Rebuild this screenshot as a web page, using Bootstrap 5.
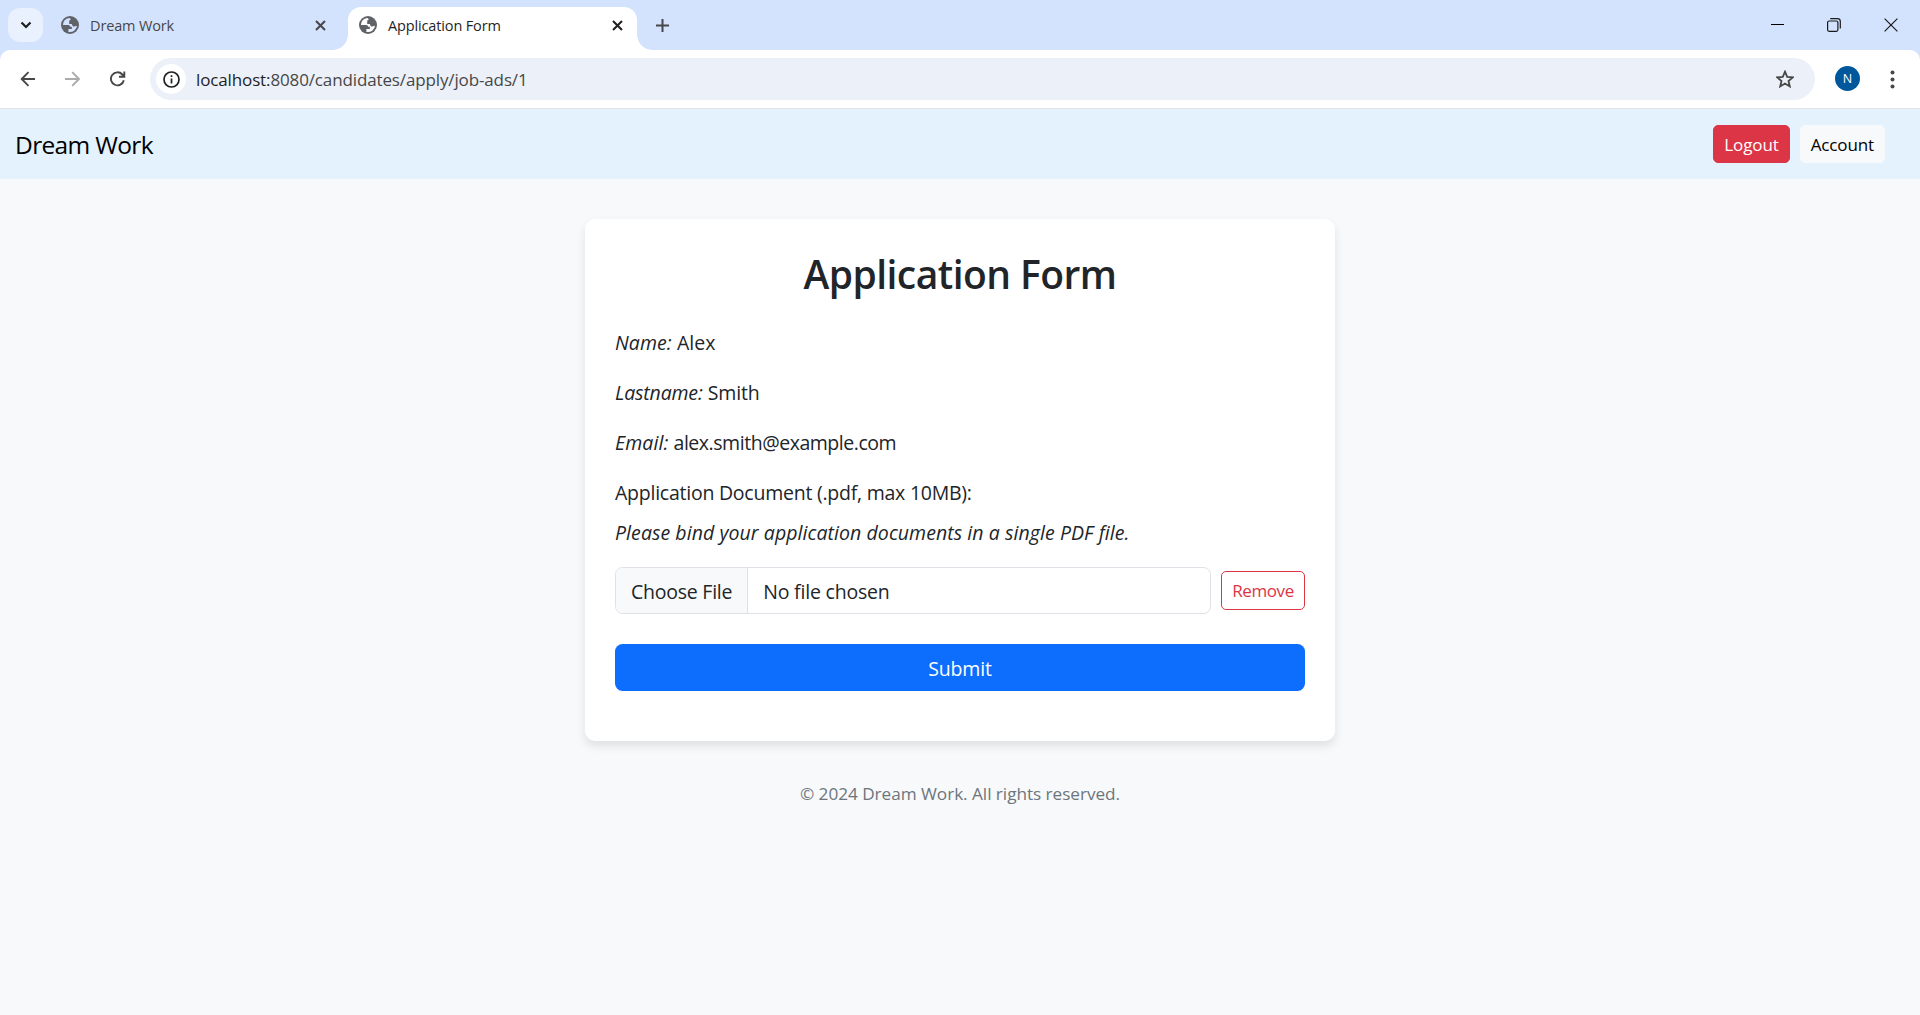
<!DOCTYPE html>
<html lang="en">
<head>
<meta charset="utf-8">
<meta name="viewport" content="width=device-width, initial-scale=1">
<title>Application Form</title>
<link href="https://cdn.jsdelivr.net/npm/bootstrap@5.3.0/dist/css/bootstrap.min.css" rel="stylesheet">
<script src="https://cdn.jsdelivr.net/npm/bootstrap@5.3.0/dist/js/bootstrap.bundle.min.js" defer></script>
<style>
html{font-size:20px}
body{font-family:"Open Sans","Noto Sans",sans-serif;background:#f8f9fa;height:1015px;overflow:hidden;font-size:19.5px;line-height:30px}
svg{display:block;flex:none}
/* browser window */
.tabstrip{height:50px;background:#d3e2fd;padding:0 22px 0 8px}
.tab-search{width:35px;height:34px;border-radius:12px;background:#eaf1fe;margin-top:8px}
.browser-tab{font-size:14.5px;line-height:20px;letter-spacing:-.14px}
.tab-name{margin-left:11px;padding-top:1px}
.tab-idle{--land:#d3e2fd;width:300px;height:50px;margin-left:5px;padding-left:13px;padding-right:22.5px;color:#474747}
.tab-open{--land:#fff;width:289px;height:43px;margin-top:7px;padding:0 14px 7px 11px;background:#fff;border-radius:13px 13px 0 0;position:relative;color:#1f1f1f}
.tab-open::before,.tab-open::after{content:"";position:absolute;bottom:0;width:15px;height:15px}
.tab-open::before{left:-15px;background:radial-gradient(circle at 0 0,transparent 14.5px,#fff 15px)}
.tab-open::after{right:-15px;background:radial-gradient(circle at 100% 0,transparent 14.5px,#fff 15px)}
.new-tab{margin-left:18.5px}
.win-controls{gap:43px;height:49px}
.toolbar-wrap{background:#d3e2fd}
.toolbar{height:59px;background:#fff;border-radius:10px 10px 0 0;border-bottom:1px solid #dfe3e5;padding:0 25px 0 20px}
.history{gap:29px;margin-right:24px}
.omnibox{height:42px;border-radius:21px;background:#ecf0f9;padding:0 21px 0 6px;font-size:17px;letter-spacing:-.13px;color:#474747}
.omnibox b{font-weight:400;color:#1f1f1f}
.url-text{padding-top:1px}
.site-info{width:30px;height:30px;border-radius:50%;background:#fff;margin-right:10px}
.avatar{width:25px;height:25px;border-radius:50%;background:#00579c;font-size:12.5px;color:#fff;line-height:25px;text-align:center;margin:0 30px 1px 20px}
/* page */
.site-nav{height:70px;background:#e3f2fd;padding:0 35px 0 15px}
.site-brand{font-size:24.5px;color:#000;letter-spacing:-.65px;padding-top:1px}
.btn-sm{font-size:17px;line-height:26px;letter-spacing:-.12px;padding:6px 10px 5px;--bs-btn-border-radius:5px}
.site-nav .btn-sm{height:38px;padding-bottom:4px}
.form-card{width:750px;margin:40px auto 0;padding:31px 30px 30px;border-radius:10px;background:#fff;box-shadow:0 5px 10px rgba(0,0,0,.1)}
.form-card h1{font-size:39px;line-height:48px;font-weight:600;letter-spacing:-.55px;margin-bottom:30px}
.form-card p{margin-bottom:20px;height:30px}
.form-card p.doc-label{margin-bottom:10px;letter-spacing:-.24px}
.form-card p.doc-hint{margin-bottom:19px;letter-spacing:.07px}
.field-name{letter-spacing:.1px}
.last-name{letter-spacing:-.16px}
.mail{letter-spacing:-.46px}
.upload{gap:10px;margin-bottom:30px}
.upload .form-control{font-size:19.5px;line-height:30px;height:47px;letter-spacing:-.2px;padding:8.5px 15px 6.5px;border-radius:7.5px}
.upload .form-control::file-selector-button{letter-spacing:-.24px;padding:8.5px 15px 6.5px;margin:-8.5px 15px -6.5px -15px}
.upload .btn{letter-spacing:-.4px;width:84px;padding-left:0;padding-right:0;flex:none}
.submit-btn{font-size:19.5px;line-height:30px;letter-spacing:-.2px;height:47px;padding:9px 15px 6px;border:0;border-radius:7.5px;margin-bottom:20px}
.site-foot{margin-top:38px;font-size:17.2px;letter-spacing:-.04px;color:#6c757d}
</style>
</head>
<body>
<svg width="0" height="0" class="position-absolute"><symbol id="globe" viewBox="0 0 18 18"><circle cx="9" cy="9" r="9" fill="#5f6368"/><path d="M8.100 1.900A7.100 7.100 0 0 0 1.900 9h5.300c1.200 0 1.800.8 1.800 1.800h1.800v2.300H7.400v2.800a7.100 7.100 0 0 0 8.700-6.300c-.9.7-1.600.9-2.700.9-1.700 0-2-1-2.600-2.600H8.200V5.300c0-.9.7-1.500 1.600-1.500 0-.9-.6-1.700-1.700-1.900z" fill="var(--land)"/></symbol></svg>
<header>
  <div class="tabstrip d-flex">
    <div class="tab-search d-flex align-items-center justify-content-center"><svg width="12" height="8" viewBox="0 0 12 8" fill="none" stroke="#1f1f1f" stroke-width="2.2"><path d="m1.500 1.500 4.500 4.500 4.500-4.500"/></svg></div>
    <div class="browser-tab tab-idle d-flex align-items-center"><svg width="18" height="18"><use href="#globe"/></svg><span class="flex-grow-1 tab-name">Dream Work</span><svg width="11" height="11" viewBox="0 0 11 11" stroke="#474747" stroke-width="2"><path d="m1 1 9 9m0-9-9 9"/></svg></div>
    <div class="browser-tab tab-open d-flex align-items-center"><svg width="18" height="18"><use href="#globe"/></svg><span class="flex-grow-1 tab-name">Application Form</span><svg width="11" height="11" viewBox="0 0 11 11" stroke="#1f1f1f" stroke-width="2"><path d="m1 1 9 9m0-9-9 9"/></svg></div>
    <svg class="new-tab align-self-center" width="13" height="13" viewBox="0 0 13 13" stroke="#474747" stroke-width="2"><path d="M6.500 0v13M0 6.500h13"/></svg>
    <div class="win-controls d-flex align-items-center ms-auto">
      <svg width="13" height="13" viewBox="0 0 13 13" stroke="#000"><path d="M0 6.500h13"/></svg>
      <svg width="14" height="14" viewBox="0 0 14 14" fill="none" stroke="#1a1a1a" stroke-width="1.200"><rect x=".6" y="3" width="10.300" height="10.300" rx="1.500"/><path d="M3.200.7h7.300a2.800 2.800 0 0 1 2.800 2.800v7"/></svg>
      <svg width="14" height="14" viewBox="0 0 14 14" stroke="#1a1a1a" stroke-width="1.200"><path d="m.6.6 12.800 12.800m0-12.800L.6 13.400"/></svg>
    </div>
  </div>
  <div class="toolbar-wrap"><div class="toolbar d-flex align-items-center">
    <div class="history d-flex">
      <svg width="16" height="16" viewBox="0 0 16 16" fill="none" stroke="#474747" stroke-width="1.900"><path d="M15 8H2M8.500 1.200 1.700 8l6.800 6.800"/></svg>
      <svg width="16" height="16" viewBox="0 0 16 16" fill="none" stroke="#ababab" stroke-width="1.900"><path d="M0 8h13.500M7.200 1.200 14 8l-6.800 6.800"/></svg>
      <svg width="16" height="16" viewBox="0 0 16 16" fill="none" stroke="#474747" stroke-width="1.900"><path d="M13.800 9.200A6.500 6.500 0 1 1 12.300 3.500L14 5.300M14.300.5v5.200H9"/></svg>
    </div>
    <div class="omnibox d-flex align-items-center flex-grow-1">
      <div class="site-info d-flex align-items-center justify-content-center"><svg width="17" height="17" viewBox="0 0 17 17" fill="none" stroke="#1f1f1f" stroke-width="1.700"><circle cx="8.500" cy="8.500" r="7.500"/><path d="M8.500 7.500v5M8.500 4.300V6"/></svg></div>
      <span class="flex-grow-1 url-text"><b>localhost:</b>8080/candidates/apply/job-ads/1</span>
      <svg width="18" height="18" viewBox="0 0 18 18" fill="none" stroke="#474747" stroke-width="1.800"><path d="m9 1.700 2.200 5.200 5.500.5-4.200 3.600 1.300 5.400L9 13.500l-4.800 2.900L5.500 11 1.300 7.400l5.500-.5z"/></svg>
    </div>
    <div class="avatar">N</div>
    <svg width="5" height="19" viewBox="0 0 5 19" fill="#474747"><circle cx="2.500" cy="2.500" r="2"/><circle cx="2.500" cy="9.500" r="2"/><circle cx="2.500" cy="16.500" r="2"/></svg>
  </div></div>
</header>
<nav class="site-nav d-flex align-items-center"><a class="site-brand text-decoration-none me-auto" href="#">Dream Work</a><button class="btn btn-danger btn-sm me-2">Logout</button><button class="btn btn-light btn-sm">Account</button></nav>
<main class="form-card">
  <h1 class="text-center">Application Form</h1>
  <p><em class="field-name">Name:</em> Alex</p>
  <p><em class="last-name">Lastname:</em> <span class="last-name">Smith</span></p>
  <p><em class="field-name">Email:</em> <span class="mail">alex.smith@example.com</span></p>
  <p class="doc-label">Application Document (.pdf, max 10MB):</p>
  <p class="doc-hint"><em>Please bind your application documents in a single PDF file.</em></p>
  <div class="upload d-flex align-items-center">
    <input type="file" class="form-control" accept=".pdf">
    <button class="btn btn-outline-danger btn-sm">Remove</button>
  </div>
  <button class="btn btn-primary submit-btn w-100">Submit</button>
</main>
<footer class="site-foot text-center">© 2024 Dream Work. All rights reserved.</footer>
</body>
</html>
